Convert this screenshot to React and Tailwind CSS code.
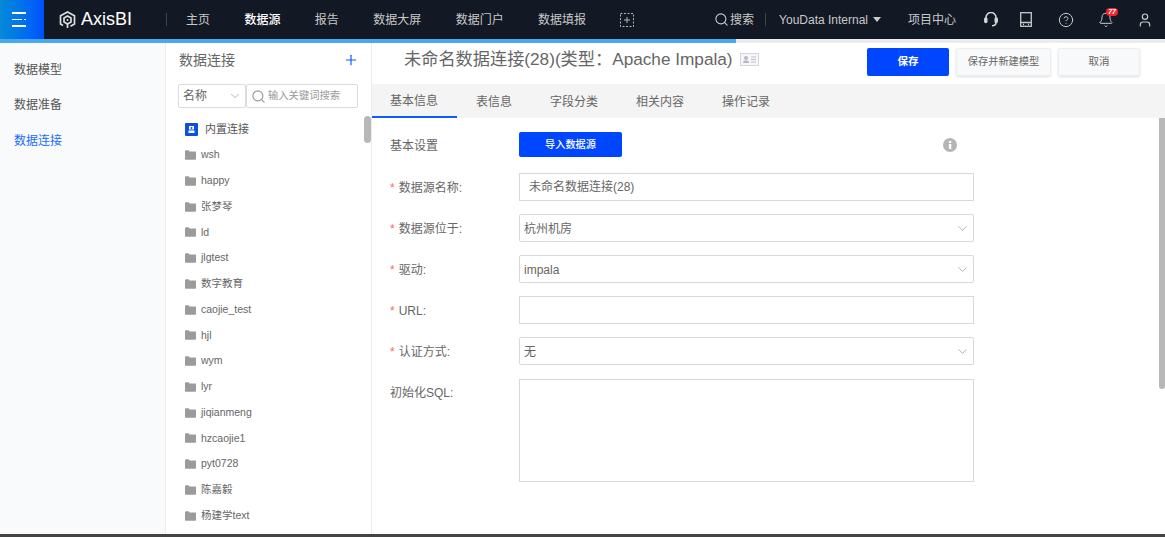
import React from "react";
import { ChevronDown, Search, Plus, HelpCircle, Bell, User } from "lucide-react";

const FONT = { fontFamily: '"Liberation Sans","Noto Sans CJK SC",sans-serif' };

function Folder() {
  return (
    <svg width="11" height="10" viewBox="0 0 11 10" className="shrink-0">
      <path d="M0 1.2C0 .6.4.3 1 .3h2.6l1 1.2H10c.6 0 1 .4 1 1v6.2c0 .6-.4 1-1 1H1c-.6 0-1-.4-1-1z" fill="#9b9b9b" />
    </svg>
  );
}

function Logo() {
  return (
    <svg width="17" height="18" viewBox="0 0 17 18" fill="none" stroke="#dcdcdc" strokeWidth="1.7">
      <path d="M4 14.5 1.5 13V4.8L8.5 1l7 3.8V13l-4 2.3" />
      <path d="M5 7 8.5 5 12 7v4L8.5 13 5 11Z" />
      <path d="M8.5 13v4" />
      <circle cx="8.5" cy="9" r="1" fill="#dcdcdc" stroke="none" />
    </svg>
  );
}

function Headset() {
  return (
    <svg width="14" height="15" viewBox="0 0 14 15" className="ml-[28px]" fill="none" stroke="#d5d5d5" strokeWidth="1.5">
      <path d="M2 7V5.5a5 5 0 0 1 10 0V7" />
      <rect x=".8" y="6" width="2" height="4.5" rx="1" fill="#d5d5d5" />
      <rect x="11.2" y="6" width="2" height="4.5" rx="1" fill="#d5d5d5" />
      <path d="M12 10.5c0 2-1.5 3.2-4 3.2" />
    </svg>
  );
}

const rows = ["wsh","happy","张梦琴","ld","jlgtest","数字教育","caojie_test","hjl","wym","lyr","jiqianmeng","hzcaojie1","pyt0728","陈嘉毅","杨建学text"];
const nav = ["主页","数据源","报告","数据大屏","数据门户","数据填报"];
const tabs = ["基本信息","表信息","字段分类","相关内容","操作记录"];

function Label({ req, children }) {
  return (
    <div className="w-[149px] shrink-0 pl-[18px] pt-px text-[12px] text-[#666]">
      {req && <span className="text-[#f56c6c] mr-[4px]">*</span>}
      {children}
    </div>
  );
}

function SelectBox({ value }) {
  return (
    <div className="w-[455px] h-[28px] border border-[#d9d9d9] rounded-[2px] flex items-center justify-between pl-[4px] pr-[3px] text-[12px] text-[#666]">
      <span className="pt-px">{value}</span>
      <ChevronDown size={15} strokeWidth={1.2} color="#999" />
    </div>
  );
}

export default function App() {
  return (
    <div style={FONT} className="relative h-[537px] w-[1165px] overflow-hidden bg-white flex flex-col">
      <header className="h-[39px] shrink-0 bg-[#131924] flex items-center text-[12px] text-[#c8c8c8]">
        <div className="w-[44px] h-full bg-gradient-to-r from-[#0a8ad8] to-[#0050ff] flex flex-col justify-center gap-[5px] pl-[12px]">
          <span className="block w-[14px] h-[1.5px] bg-white" />
          <span className="flex gap-[2px]">
            <span className="block w-[10px] h-[1.5px] bg-white" />
            <span className="block w-[2px] h-[1.5px] bg-white" />
          </span>
          <span className="block w-[14px] h-[1.5px] bg-white" />
        </div>
        <div className="ml-[15px]"><Logo /></div>
        <span className="ml-[5px] text-[18px] text-white w-[50px]">AxisBI</span>
        <span className="ml-[35px] w-px h-[13px] bg-[#444]" />
        <nav className="ml-[19px] flex gap-[34.4px]">
          {nav.map((n) => (
            <span key={n} className={n === "数据源" ? "text-white font-medium" : ""}>{n}</span>
          ))}
        </nav>
        <svg width="14" height="14" viewBox="0 0 14 14" className="ml-[34px]" fill="none" stroke="#b5b5b5">
          <rect x=".5" y=".5" width="13" height="13" strokeDasharray="2 1.5" />
          <path d="M4 7h6M7 4v6" />
        </svg>
        <Search size={15} strokeWidth={1.8} className="ml-[80px]" />
        <span className="ml-[1px]">搜索</span>
        <span className="ml-[11px] w-px h-[13px] bg-[#444]" />
        <span className="ml-[13px]">YouData Internal</span>
        <span className="ml-[5px] w-0 h-0 border-x-[4px] border-x-transparent border-t-[5px] border-t-[#ccc]" />
        <span className="ml-[27px]">项目中心</span>
        <Headset />
        <svg width="12" height="15" viewBox="0 0 12 15" className="ml-[22px]" fill="none" stroke="#c8c8c8" strokeWidth="1.3">
          <rect x=".7" y=".7" width="10.6" height="13.6" />
          <path d="M.7 10.5h10.6M3 12.5h1M8 12.5h1" />
        </svg>
        <HelpCircle size={16} strokeWidth={1.5} className="ml-[26px]" />
        <div className="relative ml-[24px]">
          <Bell size={16} strokeWidth={1.5} />
          <span className="absolute -top-[4px] left-[8px] w-[12px] h-[8px] rounded-full bg-[#f5222d] text-white text-[7px] leading-[8px] text-center italic font-bold">77</span>
        </div>
        <User size={16} strokeWidth={1.8} className="ml-[23px]" />
      </header>

      <div className="h-[4px] shrink-0 bg-[#ececec]">
        <div className="h-full w-[736px] bg-[#4aa8ef]" />
      </div>

      <div className="flex-1 flex min-h-0">
        <aside className="w-[166px] shrink-0 bg-[#f9fafc] border-r border-[#ececec] pt-[9px] text-[12px] text-[#555]">
          {["数据模型","数据准备","数据连接"].map((t, i) => (
            <div key={t} className={`h-[35.5px] pl-[14px] flex items-center ${i === 2 ? "text-[#1a6cff]" : ""}`}>{t}</div>
          ))}
        </aside>

        <section className="relative w-[206px] shrink-0 border-r border-[#ececec] overflow-hidden">
          <div className="h-[41px] pb-[7px] pl-[13px] pr-[12px] flex items-center justify-between">
            <span className="text-[14px] text-[#666]">数据连接</span>
            <Plus size={16} strokeWidth={1.8} color="#0d5cff" />
          </div>
          <div className="ml-[12px] flex h-[24px] text-[12px]">
            <div className="w-[68px] border border-[#dcdcdc] rounded-[2px] flex items-center justify-between pl-[4px] pr-[3px] text-[#666]">
              名称<ChevronDown size={14} strokeWidth={1.2} color="#999" />
            </div>
            <div className="w-[112px] border border-[#dcdcdc] rounded-[2px] flex items-center pl-[4px] gap-[2px] text-[10.3px] text-[#999]">
              <Search size={15} strokeWidth={1.8} color="#999" />输入关键词搜索
            </div>
          </div>
          <div className="mt-[8.5px]">
            <div className="h-[25.75px] pl-[19px] flex items-center gap-[7px] text-[11px] text-[#555]">
              <svg width="13" height="13" viewBox="0 0 13 13">
                <rect width="13" height="13" rx="1" fill="#0d50e0" />
                <path d="M4 3h5v3.5H4zM3.5 7.5h6V10h-6z" fill="#fff" />
                <circle cx="6.5" cy="5" r="1" fill="#0d50e0" />
              </svg>
              内置连接
            </div>
            {rows.map((r) => (
              <div key={r} className="h-[25.75px] pl-[19px] flex items-center gap-[5px] text-[10.5px] text-[#666]">
                <Folder />{r}
              </div>
            ))}
          </div>
          <div className="absolute right-0 top-[73px] w-[7px] h-[27px] rounded-full bg-[#b8b8b8]" />
        </section>

        <main className="relative flex-1 min-w-0 overflow-hidden">
          <div className="h-[41px] pb-[3px] flex items-center pl-[32px] pr-[25px]">
            <span className="mb-[5px] text-[17.2px] text-[#666] leading-none">未命名数据连接(28)(类型：Apache Impala)</span>
            <svg width="19" height="13" viewBox="0 0 19 13" className="ml-[7px] mb-[5px]" fill="none">
              <rect x=".5" y=".5" width="18" height="12" fill="#f5f5fa" stroke="#d5d5e0" />
              <circle cx="6" cy="5" r="2" fill="#b5b5c5" />
              <path d="M3 10c0-2 1.5-2.5 3-2.5S9 8 9 10z" fill="#b5b5c5" />
              <path d="M11 4h5M11 6.5h5M11 9h5" stroke="#c0c0cc" />
            </svg>
            <button className="ml-auto w-[82px] h-[28px] bg-[#0046ff] rounded-[2px] text-white text-[10.5px] font-bold">保存</button>
            <button className="ml-[7px] w-[95px] h-[28px] bg-[#f8f9fb] border border-[#eee] rounded-[2px] text-[#666] text-[10.2px] shadow-sm">保存并新建模型</button>
            <button className="ml-[7px] w-[82px] h-[28px] bg-[#f8f9fb] border border-[#eee] rounded-[2px] text-[#666] text-[10.5px] shadow-sm">取消</button>
          </div>

          <div className="h-[34px] bg-[#f4f4f4] flex text-[12px] text-[#666]">
            {tabs.map((t, i) => (
              <div key={t} className={`h-full flex items-center ${i === 0 ? "w-[85px] pl-[18px] pt-[2px] border-b-2 border-[#0d5cff]" : i === 1 ? "w-[86px] pl-[19px] pt-[1px]" : "w-[86px] pl-[7px] pt-[1px]"}`}>{t}</div>
            ))}
          </div>

          <div className="pt-[14px]">
            <div className="flex items-center h-[25px]">
              <div className="pt-[1px]"><Label>基本设置</Label></div>
              <button className="-ml-[2px] w-[103px] h-[25px] bg-[#0046ff] rounded-[2px] text-white text-[10.2px] font-medium">导入数据源</button>
              <svg width="14" height="14" viewBox="0 0 14 14" className="ml-[321px]">
                <circle cx="7" cy="7" r="7" fill="#b5b5b5" />
                <rect x="5.9" y="6" width="2.4" height="5" fill="#fff" />
                <rect x="5.9" y="3" width="2.4" height="2" fill="#fff" />
              </svg>
            </div>

            <div className="mt-[16px] flex flex-col gap-[13px]">
              <div className="flex items-center">
                <Label req>数据源名称:</Label>
                <div className="-ml-[2px] w-[455px] h-[28px] border border-[#d9d9d9] flex items-center pl-[9px] text-[12px] text-[#666]">未命名数据连接(28)</div>
              </div>
              <div className="flex items-center"><Label req>数据源位于:</Label><div className="-ml-[2px]"><SelectBox value="杭州机房" /></div></div>
              <div className="flex items-center"><Label req>驱动:</Label><div className="-ml-[2px]"><SelectBox value="impala" /></div></div>
              <div className="flex items-center">
                <Label req>URL:</Label>
                <div className="-ml-[2px] w-[455px] h-[28px] border border-[#d9d9d9]" />
              </div>
              <div className="flex items-center"><Label req>认证方式:</Label><div className="-ml-[2px]"><SelectBox value="无" /></div></div>
              <div className="flex items-start mt-px">
                <div className="pt-[4px]"><Label>初始化SQL:</Label></div>
                <div className="-ml-[2px] w-[455px] h-[103px] border border-[#d9d9d9]" />
              </div>
            </div>
          </div>
          <div className="absolute right-0 top-[75px] w-[6px] h-[271px] rounded-b-[3px] bg-[#b8b8b8]" />
        </main>
      </div>

      <div className="h-[3px] shrink-0 bg-[#444]" />
    </div>
  );
}
